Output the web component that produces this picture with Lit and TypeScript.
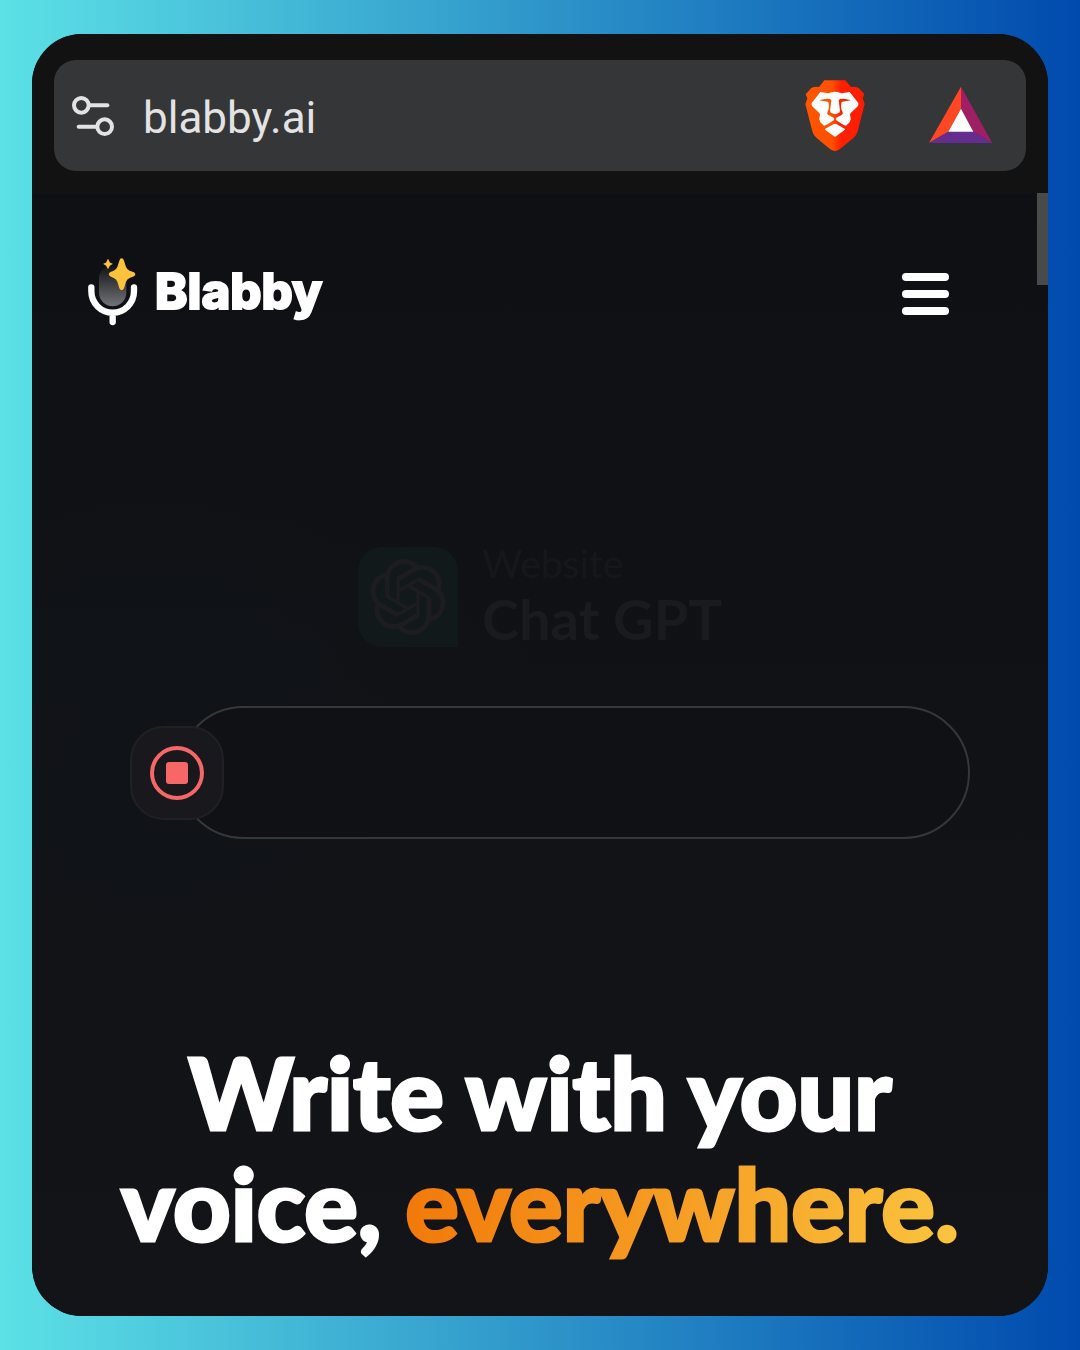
import { LitElement, html, css, svg } from "lit";
import { customElement, property } from "lit/decorators.js";

const tuneIcon = svg`
  <svg width="42" height="40" viewBox="0 0 126 120" fill="none" stroke="#e3e3e3" stroke-width="12" stroke-linecap="round" aria-hidden="true">
    <circle cx="28" cy="28" r="22" />
    <path d="M53 28H106" />
    <circle cx="98" cy="92" r="22" />
    <path d="M20 92H73" />
  </svg>
`;

const braveIcon = svg`
  <svg width="60" height="72" viewBox="46 44 180 216" aria-hidden="true">
    <defs>
      <linearGradient id="lion" x1="0" x2="1" y1="0" y2="0">
        <stop offset="0" stop-color="#ff5500" />
        <stop offset="0.45" stop-color="#ff5000" />
        <stop offset="0.6" stop-color="#ff2000" />
        <stop offset="1" stop-color="#ff1c00" />
      </linearGradient>
    </defs>
    <path fill="url(#lion)" d="M104 45H167L184 65Q200 62 208 69L224 87L219 99L225 116L204 198Q201 211 191 218L154 249Q136 266 118 249L81 218Q71 211 68 198L47 116L53 99L48 87L64 69Q72 62 88 65Z" />
    <path fill="#fff" d="M92 80L116 84Q136 74 156 84L180 80L206 113Q208 120 203 124L183 143Q179 148 182 153Q186 162 180 171L169 181Q162 180 157 176L140 165Q136 161 140 157L157 148Q161 145 159 141L155 131Q153 123 155 113L157 109L184 105Q164 98 151 101L147 105L151 137Q150 143 145 144L136 147L127 144Q122 143 121 137L125 105L121 101Q108 98 88 105L115 109L117 113Q119 123 117 131L113 141Q111 145 115 148L132 157Q136 161 132 165L115 176Q110 180 103 181L92 171Q86 162 90 153Q93 148 89 143L69 124Q64 120 66 113Z" />
    <path fill="#fff" d="M107 190L131 177Q136 174 141 177L165 190Q167 192 165 194L141 211Q136 216 131 211L107 194Q105 192 107 190Z" />
  </svg>
`;

const rewardsIcon = svg`
  <svg width="64" height="58" viewBox="414 66 192 174" aria-hidden="true">
    <path fill="#ff4724" d="M513 65V131L475 200L417 234Z" />
    <path fill="#9e1f63" d="M513 65L607 234L550 200L513 131Z" />
    <path fill="#662d91" d="M417 234L475 200H550L607 234Z" />
    <path fill="#fff" d="M513 131L550 200H475Z" />
  </svg>
`;

const micIcon = svg`
  <svg width="51" height="68" viewBox="38 23 153 204" aria-hidden="true">
    <defs>
      <linearGradient id="capsule" x1="0" x2="0" y1="0" y2="1">
        <stop offset="0" stop-color="#0f1014" />
        <stop offset="1" stop-color="#737477" />
      </linearGradient>
    </defs>
    <rect x="71" y="43" width="82" height="125" rx="41" fill="url(#capsule)" />
    <path d="M48 111V123A64 64 0 0 0 176 123V111M112 190V215" fill="none" stroke="#fff" stroke-width="19" stroke-linecap="round" />
    <path fill="#fcc23c" d="M139 24Q144 24 146 31L152 50Q155 58 163 61L176 66Q184 72 176 78L163 83Q155 86 152 94L146 114Q139 126 132 114L126 94Q123 86 115 83L104 78Q97 72 104 66L115 61Q123 58 126 50L132 31Q134 24 139 24Z" />
    <path fill="#fcc23c" d="M98 26Q100 26 101 31Q103 37 108 39Q116 41 108 43Q103 45 101 51Q98 61 95 51Q93 45 88 43Q80 41 88 39Q93 37 95 31Q96 26 98 26Z" />
  </svg>
`;

const openAiIcon = svg`
  <svg width="76" height="76" viewBox="0 0 24 24" fill="#1c1c21" aria-hidden="true">
    <path d="M22.2819 9.8211a5.9847 5.9847 0 0 0-.5157-4.9108 6.0462 6.0462 0 0 0-6.5098-2.9A6.0651 6.0651 0 0 0 4.9807 4.1818a5.9847 5.9847 0 0 0-3.9977 2.9 6.0462 6.0462 0 0 0 .7427 7.0966 5.98 5.98 0 0 0 .511 4.9107 6.051 6.051 0 0 0 6.5146 2.9001A5.9847 5.9847 0 0 0 13.2599 24a6.0557 6.0557 0 0 0 5.7718-4.2058 5.9894 5.9894 0 0 0 3.9977-2.9001 6.0557 6.0557 0 0 0-.7475-7.0729zm-9.022 12.6081a4.4755 4.4755 0 0 1-2.8764-1.0408l.1419-.0804 4.7783-2.7582a.7948.7948 0 0 0 .3927-.6813v-6.7369l2.02 1.1686a.071.071 0 0 1 .038.052v5.5826a4.504 4.504 0 0 1-4.4945 4.4944zm-9.6607-4.1254a4.4708 4.4708 0 0 1-.5346-3.0137l.142.0852 4.783 2.7582a.7712.7712 0 0 0 .7806 0l5.8428-3.3685v2.3324a.0804.0804 0 0 1-.0332.0615L9.74 19.9502a4.4992 4.4992 0 0 1-6.1408-1.6464zM2.3408 7.8956a4.485 4.485 0 0 1 2.3655-1.9728V11.6a.7664.7664 0 0 0 .3879.6765l5.8144 3.3543-2.0201 1.1685a.0757.0757 0 0 1-.071 0l-4.8303-2.7865A4.504 4.504 0 0 1 2.3408 7.872zm16.5963 3.8558L13.1038 8.364 15.1192 7.2a.0757.0757 0 0 1 .071 0l4.8303 2.7913a4.4944 4.4944 0 0 1-.6765 8.1042v-5.6772a.79.79 0 0 0-.407-.667zm2.0107-3.0231l-.142-.0852-4.7735-2.7818a.7759.7759 0 0 0-.7854 0L9.409 9.2297V6.8974a.0662.0662 0 0 1 .0284-.0615l4.8303-2.7866a4.4992 4.4992 0 0 1 6.6802 4.66zM8.3065 12.863l-2.02-1.1638a.0804.0804 0 0 1-.038-.0567V6.0742a4.4992 4.4992 0 0 1 7.3757-3.4537l-.142.0805L8.704 5.459a.7948.7948 0 0 0-.3927.6813zm1.0976-2.3654l2.602-1.4998 2.6069 1.4998v2.9994l-2.5974 1.4997-2.6067-1.4997Z" />
  </svg>
`;

const stopIcon = svg`
  <svg width="56" height="56" viewBox="0 0 56 56" aria-hidden="true">
    <circle cx="28" cy="28" r="25" fill="none" stroke="#f76767" stroke-width="4" />
    <rect x="17" y="17" width="22" height="22" rx="3" fill="#f76767" />
  </svg>
`;

@customElement("browser-bar")
export class BrowserBar extends LitElement {
  static styles = css`
    :host {
      display: block;
      padding: 26px 22px 22px;
      background: #121212;
    }

    .address {
      display: flex;
      align-items: center;
      height: 111px;
      padding: 0 34px 0 18px;
      border-radius: 22px;
      background: #353638;
      box-sizing: border-box;
    }

    button {
      display: flex;
      padding: 0;
      border: none;
      background: none;
      cursor: pointer;
    }

    input {
      flex: 1;
      min-width: 0;
      margin-left: 29px;
      padding: 4px 0 0;
      border: none;
      outline: none;
      background: none;
      color: #e3e3e3;
      font: 400 44px/56px Roboto, sans-serif;
    }

    .actions {
      display: flex;
      align-items: center;
      gap: 63px;
    }
  `;

  @property({ type: String }) url = "";

  render() {
    return html`
      <div class="address">
        <button aria-label="Site settings">${tuneIcon}</button>
        <input type="text" aria-label="Address" .value=${this.url} />
        <div class="actions">
          <button aria-label="Shields">${braveIcon}</button>
          <button aria-label="Rewards">${rewardsIcon}</button>
        </div>
      </div>
    `;
  }
}

@customElement("site-header")
export class SiteHeader extends LitElement {
  static styles = css`
    :host {
      display: flex;
      align-items: center;
      justify-content: space-between;
      padding: 65px 99px 0 56px;
    }

    .brand {
      display: flex;
      align-items: center;
      gap: 16px;
      color: white;
      text-decoration: none;
    }

    .name {
      font: 800 49px/68px Inter, sans-serif;
      -webkit-text-stroke: 2px white;
      stroke-linejoin: round;
    }

    .menu {
      display: flex;
      flex-direction: column;
      gap: 9px;
      padding: 4px 0 0;
      border: none;
      background: none;
      cursor: pointer;
    }

    .line {
      width: 47px;
      height: 8px;
      border-radius: 4px;
      background: white;
    }
  `;

  render() {
    return html`
      <a class="brand" href="#">
        ${micIcon}
        <span class="name">Blabby</span>
      </a>
      <button class="menu" aria-label="Menu">
        <span class="line"></span>
        <span class="line"></span>
        <span class="line"></span>
      </button>
    `;
  }
}

@customElement("voice-demo")
export class VoiceDemo extends LitElement {
  static styles = css`
    :host {
      display: block;
      padding: 221px 78px 0 98px;
    }

    .target {
      display: flex;
      justify-content: center;
      gap: 24px;
      height: 100px;
      margin-right: 20px;
    }

    .tile {
      display: flex;
      align-items: center;
      justify-content: center;
      width: 100px;
      height: 100px;
      border-radius: 24px 24px 0 24px;
      background: #12191b;
    }

    .kind {
      margin-bottom: 6px;
      color: #16171b;
      font: 400 39px/32px Lato, sans-serif;
    }

    .title {
      color: #1a1b1f;
      font: 700 56px/68px Lato, sans-serif;
    }

    .recorder {
      display: flex;
      align-items: center;
      margin-top: 59px;
    }

    .record {
      z-index: 1;
      display: flex;
      align-items: center;
      justify-content: center;
      flex: none;
      width: 94px;
      height: 94px;
      padding: 0;
      border: 2px solid #202125;
      border-radius: 34px;
      background: #18181d;
      cursor: pointer;
    }

    .transcript {
      flex: 1;
      min-width: 0;
      height: 133px;
      margin-left: -47px;
      padding: 0 66px;
      border: 2px solid #36373a;
      border-radius: 67px;
      outline: none;
      box-sizing: border-box;
      background: #101114;
      color: white;
      font: 400 39px/48px Lato, sans-serif;
    }
  `;

  @property({ type: String }) kind = "";
  @property({ type: String }) name = "";

  render() {
    return html`
      <div class="target">
        <div class="tile">${openAiIcon}</div>
        <div>
          <div class="kind">${this.kind}</div>
          <div class="title">${this.name}</div>
        </div>
      </div>
      <div class="recorder">
        <button class="record" aria-label="Stop recording">${stopIcon}</button>
        <input class="transcript" type="text" aria-label="Transcript" />
      </div>
    `;
  }
}

@customElement("app-root")
export class AppRoot extends LitElement {
  static styles = css`
    :host {
      display: block;
      min-height: 100vh;
      padding: 34px 32px;
      box-sizing: border-box;
      background: linear-gradient(90deg, #5ce1e6, #004aad);
    }

    .window {
      overflow: hidden;
      border-radius: 50px;
      background: #101114;
    }

    .page {
      position: relative;
      padding-bottom: 58px;
      background:
        radial-gradient(circle at 12% 50%, rgba(14, 22, 26, 0.3), transparent 400px),
        linear-gradient(#0e1014, #131418);
    }

    /* Overlay scrollbar, drawn on top of the page */
    .scrollbar {
      position: absolute;
      top: 0;
      right: 0;
      width: 11px;
      height: 92px;
      background: #4a4a4b;
    }

    h1 {
      margin: 197px 0 0;
      color: white;
      text-align: center;
      font: 900 100px/111px Lato, sans-serif;
      -webkit-text-stroke: 3px white;
    }

    .accent {
      background: linear-gradient(90deg, #f2790a, #fac43e);
      -webkit-background-clip: text;
      background-clip: text;
      color: transparent;
      -webkit-text-stroke-color: transparent;
    }
  `;

  render() {
    return html`
      <div class="window">
        <browser-bar url="blabby.ai"></browser-bar>
        <main class="page">
          <div class="scrollbar"></div>
          <site-header></site-header>
          <voice-demo kind="Website" name="Chat GPT"></voice-demo>
          <h1>Write with your<br />voice, <span class="accent">everywhere.</span></h1>
        </main>
      </div>
    `;
  }
}
